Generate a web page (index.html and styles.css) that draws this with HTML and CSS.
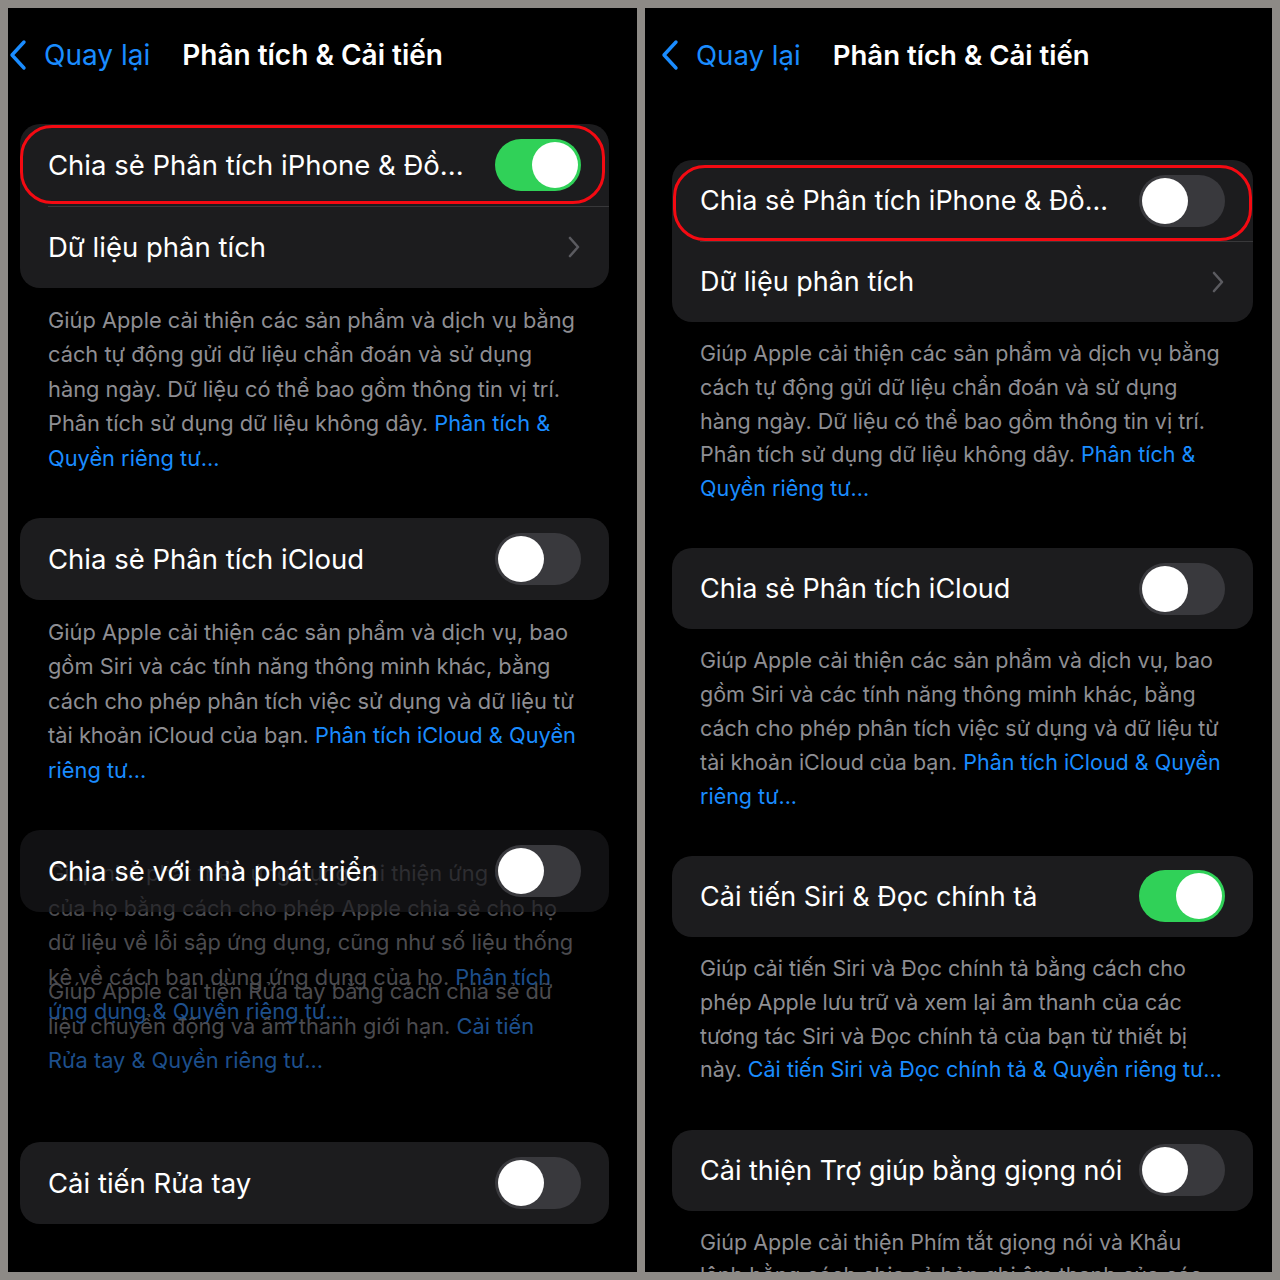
FILE: index.html
```html
<!DOCTYPE html>
<html lang="vi">
<head>
    <meta charset="UTF-8">
    <meta name="viewport" content="width=device-width, initial-scale=1.0">
    <title>Phân tích &amp; Cải tiến</title>
    <link rel="stylesheet" href="styles.css">
</head>
<body>
    <div class="frame">
        <!-- Left screenshot -->
        <div class="panel panel-left">
            <div class="nav">
                <span class="back">
                    <svg class="back-icon" width="18" height="32" viewBox="0 0 18 32"><path d="M15 3 L3 16 L15 29" fill="none" stroke="#1a8cff" stroke-width="3.4" stroke-linecap="round" stroke-linejoin="round"/></svg>
                    <span class="back-text">Quay lại</span>
                </span>
                <span class="nav-title">Phân tích &amp; Cải tiến</span>
            </div>

            <div class="group group-first">
                <div class="row">
                    <span class="row-label">Chia sẻ Phân tích iPhone &amp; Đồ...</span>
                    <span class="toggle on"><span class="knob"></span></span>
                    <span class="mark"></span>
                </div>
                <div class="row row-sep">
                    <span class="row-label">Dữ liệu phân tích</span>
                    <svg class="chev" width="14" height="22" viewBox="0 0 14 22"><path d="M3 2 L11 11 L3 20" fill="none" stroke="#5b5b60" stroke-width="2.6" stroke-linecap="round" stroke-linejoin="round"/></svg>
                </div>
            </div>
            <p class="note">Giúp Apple cải thiện các sản phẩm và dịch vụ bằng<br>cách tự động gửi dữ liệu chẩn đoán và sử dụng<br>hàng ngày. Dữ liệu có thể bao gồm thông tin vị trí.<br>Phân tích sử dụng dữ liệu không dây. <a>Phân tích &amp;<br>Quyền riêng tư...</a></p>

            <div class="group">
                <div class="row">
                    <span class="row-label">Chia sẻ Phân tích iCloud</span>
                    <span class="toggle"><span class="knob"></span></span>
                </div>
            </div>
            <p class="note">Giúp Apple cải thiện các sản phẩm và dịch vụ, bao<br>gồm Siri và các tính năng thông minh khác, bằng<br>cách cho phép phân tích việc sử dụng và dữ liệu từ<br>tài khoản iCloud của bạn. <a>Phân tích iCloud &amp; Quyền<br>riêng tư...</a></p>

            <div class="blend">
                <p class="ghost ghost-a">Giúp nhà phát triển ứng dụng cải thiện ứng dụng<br>của họ bằng cách cho phép Apple chia sẻ cho họ<br>dữ liệu về lỗi sập ứng dụng, cũng như số liệu thống<br>kê về cách bạn dùng ứng dụng của họ. <a>Phân tích<br>ứng dụng &amp; Quyền riêng tư...</a></p>
                <p class="ghost ghost-b">Giúp Apple cải tiến Rửa tay bằng cách chia sẻ dữ<br>liệu chuyển động và âm thanh giới hạn. <a>Cải tiến<br>Rửa tay &amp; Quyền riêng tư...</a></p>
                <div class="group group-fade">
                    <div class="row">
                        <span class="row-label">Chia sẻ với nhà phát triển</span>
                        <span class="toggle"><span class="knob"></span></span>
                    </div>
                </div>
            </div>

            <div class="group">
                <div class="row">
                    <span class="row-label">Cải tiến Rửa tay</span>
                    <span class="toggle"><span class="knob"></span></span>
                </div>
            </div>
        </div>

        <!-- Right screenshot -->
        <div class="panel panel-right">
            <div class="nav">
                <span class="back">
                    <svg class="back-icon" width="18" height="32" viewBox="0 0 18 32"><path d="M15 3 L3 16 L15 29" fill="none" stroke="#1a8cff" stroke-width="3.4" stroke-linecap="round" stroke-linejoin="round"/></svg>
                    <span class="back-text">Quay lại</span>
                </span>
                <span class="nav-title">Phân tích &amp; Cải tiến</span>
            </div>

            <div class="group group-first">
                <div class="row">
                    <span class="row-label">Chia sẻ Phân tích iPhone &amp; Đồ...</span>
                    <span class="toggle"><span class="knob"></span></span>
                    <span class="mark"></span>
                </div>
                <div class="row row-sep">
                    <span class="row-label">Dữ liệu phân tích</span>
                    <svg class="chev" width="14" height="22" viewBox="0 0 14 22"><path d="M3 2 L11 11 L3 20" fill="none" stroke="#5b5b60" stroke-width="2.6" stroke-linecap="round" stroke-linejoin="round"/></svg>
                </div>
            </div>
            <p class="note">Giúp Apple cải thiện các sản phẩm và dịch vụ bằng<br>cách tự động gửi dữ liệu chẩn đoán và sử dụng<br>hàng ngày. Dữ liệu có thể bao gồm thông tin vị trí.<br>Phân tích sử dụng dữ liệu không dây. <a>Phân tích &amp;<br>Quyền riêng tư...</a></p>

            <div class="group">
                <div class="row">
                    <span class="row-label">Chia sẻ Phân tích iCloud</span>
                    <span class="toggle"><span class="knob"></span></span>
                </div>
            </div>
            <p class="note">Giúp Apple cải thiện các sản phẩm và dịch vụ, bao<br>gồm Siri và các tính năng thông minh khác, bằng<br>cách cho phép phân tích việc sử dụng và dữ liệu từ<br>tài khoản iCloud của bạn. <a>Phân tích iCloud &amp; Quyền<br>riêng tư...</a></p>

            <div class="group">
                <div class="row">
                    <span class="row-label">Cải tiến Siri &amp; Đọc chính tả</span>
                    <span class="toggle on"><span class="knob"></span></span>
                </div>
            </div>
            <p class="note">Giúp cải tiến Siri và Đọc chính tả bằng cách cho<br>phép Apple lưu trữ và xem lại âm thanh của các<br>tương tác Siri và Đọc chính tả của bạn từ thiết bị<br>này. <a>Cải tiến Siri và Đọc chính tả &amp; Quyền riêng tư...</a></p>

            <div class="group">
                <div class="row">
                    <span class="row-label">Cải thiện Trợ giúp bằng giọng nói</span>
                    <span class="toggle"><span class="knob"></span></span>
                </div>
            </div>
            <p class="note">Giúp Apple cải thiện Phím tắt giọng nói và Khẩu<br>lệnh bằng cách chia sẻ bản ghi âm thanh của các<br>tương tác</p>
        </div>
    </div>
</body>
</html>
```

FILE: styles.css
```css
body {
    margin: 0;
    background: #8d8a86;
    font-family: Inter, "Noto Sans", sans-serif;
    -webkit-font-smoothing: antialiased;
}
.frame {
    display: grid;
    grid-template-columns: 629px 627px;
    column-gap: 8px;
    padding: 8px;
    height: 1264px;
}
.panel {
    background: #000;
    overflow: hidden;
    height: 1264px;
}
.nav {
    height: 94px;
    display: flex;
    align-items: center;
    color: #fff;
    font-size: 28px;
}
.back {
    display: flex;
    align-items: center;
    color: #1a8cff;
}
.back-icon {
    margin-right: 17px;
}
.back-text {
    margin-right: 32px;
}
.nav-title {
    font-weight: 600;
}
.panel-left .nav { padding-left: 1px; }
.panel-right .nav { padding-left: 16px; font-size: 27.6px; }

.group {
    background: #1c1c1e;
    border-radius: 20px;
    position: relative;
}
.panel-left .group {
    margin-left: 12px;
    width: 589px;
}
.panel-right .group {
    margin-left: 27px;
    width: 581px;
}
.panel-left .group-first { margin-top: 22px; }
.panel-right .group-first { margin-top: 58px; }

.row {
    height: 82px;
    display: flex;
    align-items: center;
    justify-content: space-between;
    padding: 0 28px;
    color: #fff;
    font-size: 27.5px;
    position: relative;
}
.panel-right .row { height: 81px; font-size: 27px; }
.row-label {
    white-space: nowrap;
}
.row-sep::before {
    content: "";
    position: absolute;
    left: 28px;
    right: 0;
    top: 0;
    height: 1px;
    background: #38383a;
}

.toggle {
    width: 86px;
    height: 52px;
    border-radius: 26px;
    background: #39393d;
    display: flex;
    align-items: center;
    padding: 0 3px;
    box-sizing: border-box;
    flex-shrink: 0;
}
.toggle .knob {
    width: 46px;
    height: 46px;
    border-radius: 50%;
    background: #fff;
}
.toggle.on {
    background: #30d158;
    justify-content: flex-end;
}

.mark {
    position: absolute;
    border: 3px solid #f40a12;
    border-radius: 32px;
    box-sizing: border-box;
}
.panel-left .mark {
    left: 0;
    top: 1px;
    width: 585px;
    height: 79px;
}
.panel-right .mark {
    left: 1px;
    top: 5px;
    width: 579px;
    height: 76px;
}

.note {
    color: #8e8e93;
    white-space: nowrap;
}
.panel-left .note {
    padding-left: 40px;
    font-size: 21.8px;
    line-height: 34.4px;
    margin: 15px 0 43px;
}
.panel-right .note {
    padding-left: 55px;
    font-size: 21.5px;
    line-height: 33.8px;
    margin: 15px 0 42.5px;
}
.note a {
    color: #1a8cff;
}

.blend {
    position: relative;
    height: 312px;
}
.ghost {
    position: absolute;
    left: 40px;
    margin: 0;
    color: #4b4b4f;
    font-size: 21.8px;
    line-height: 34.5px;
    white-space: nowrap;
}
.ghost a {
    color: #1d4f8c;
}
.ghost-a { top: 26px; }
.ghost-b { top: 144px; }
.group.group-fade {
    background: rgba(28, 28, 30, 0.62);
}
```
